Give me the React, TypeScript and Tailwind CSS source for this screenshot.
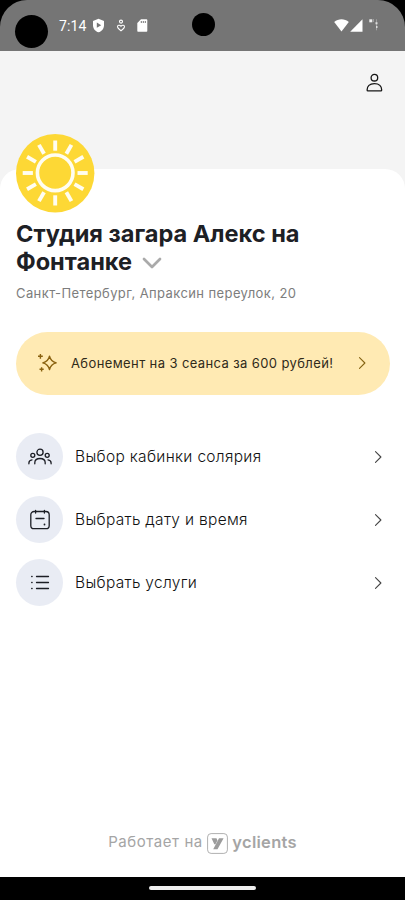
import React from 'react';

interface MenuItem {
    label: string;
    icon: React.ReactNode;
}

const RAYS = [0, 30, 60, 90, 120, 150, 180, 210, 240, 270, 300, 330];

const PeopleIcon = () => (
    <svg width="24" height="24" viewBox="0 0 24 24" fill="none" stroke="#1c1e25" strokeWidth="1.3" strokeLinecap="round">
        <circle cx="12" cy="7.3" r="3.1" />
        <path d="M6.800 18.800v-1c0-2.700 2-4.300 5.200-4.300s5.200 1.600 5.200 4.300v1" />
        <circle cx="4.800" cy="10.300" r="2" />
        <circle cx="19.200" cy="10.300" r="2" />
        <path d="M.9 18.800v-.8c0-1.700 1.200-2.900 3.100-3.100M23.100 18.800v-.8c0-1.700-1.200-2.900-3.100-3.100" />
    </svg>
);

const CalendarIcon = () => (
    <svg width="24" height="24" viewBox="0 0 24 24" fill="none" stroke="#1c1e25" strokeWidth="1.3" strokeLinecap="round">
        <rect x="2.800" y="3.500" width="18.400" height="17.200" rx="3.300" />
        <path d="M7.600 2.400v2.600M16.400 2.400v2.600M8 10.500h8" />
        <circle cx="16.500" cy="16.500" r=".9" fill="#1c1e25" stroke="none" />
    </svg>
);

const ListIcon = () => (
    <svg width="24" height="24" viewBox="0 0 24 24" fill="none" stroke="#1c1e25" strokeWidth="1.3" strokeLinecap="round">
        <path d="M8.500 5.500h12M8.500 11.500h12M8.500 17.500h12" />
        <path d="M3.700 5.500h.4M3.700 11.500h.4M3.700 17.500h.4" />
    </svg>
);

const Chevron = ({ className }: { className: string }) => (
    <svg className={className} width="8" height="14" viewBox="0 0 8 14" fill="none" stroke="currentColor" strokeWidth="1.1" strokeLinecap="round" strokeLinejoin="round">
        <path d="M1.500 1.700 6.900 7l-5.400 5.300" />
    </svg>
);

const MENU: MenuItem[] = [
    { label: 'Выбор кабинки солярия', icon: <PeopleIcon /> },
    { label: 'Выбрать дату и время', icon: <CalendarIcon /> },
    { label: 'Выбрать услуги', icon: <ListIcon /> },
];

const StatusBar = () => (
    <div className="bg-black">
        <div className="flex h-[51px] items-start rounded-t-[27px] bg-[#757575]">
            <div className="ml-[15px] mt-[14.5px] size-[33px] shrink-0 rounded-full bg-black" />
            <span className="ml-[11px] mt-[16px] w-[27px] font-['Roboto',sans-serif] text-[14px] leading-5 tracking-[0.1px] text-white">7:14</span>
            <svg className="ml-[6px] mt-[18px]" width="13" height="15" viewBox="0 0 13 15">
                <path d="M6.500.8 12 2.900v4.300c0 3.300-2.200 6.100-5.500 7.100C3.200 13.300 1 10.500 1 7.200V2.900z" fill="#fff" />
                <path d="M4.800 4.600v5.200l4.400-2.600z" fill="#757575" />
            </svg>
            <svg className="ml-[10.5px] mt-[19px]" width="10" height="13" viewBox="0 0 10 13" fill="none" stroke="#fff" strokeWidth="1.1">
                <circle cx="5" cy="2.600" r="1.500" />
                <path d="M5 7.300C3.700 5.400 1.300 6.200 1.500 7.900 1.700 9.500 3.700 10.700 5 11.700c1.300-1 3.300-2.200 3.500-3.800C8.700 6.200 6.300 5.400 5 7.300z" />
            </svg>
            <svg className="ml-[11.5px] mt-[19px]" width="11" height="13" viewBox="0 0 11 13">
                <path d="M4 .3h5.300c.6 0 1 .4 1 1v10.400c0 .6-.4 1-1 1H1.300c-.6 0-1-.4-1-1V4z" fill="#fff" />
                <path d="M4.300 2v2M6.300 2v2M8.300 2v2" stroke="#757575" />
            </svg>
            <div className="ml-[43.5px] mt-[13px] size-[23px] shrink-0 rounded-full bg-black" />
            <svg className="ml-[119.5px] mt-[19px]" width="15" height="13" viewBox="0 0 15 13">
                <path d="M7.500 12.500.2 3.100C4.300-.6 10.700-.6 14.800 3.100z" fill="#fff" />
            </svg>
            <svg className="ml-[1px] mt-[19px]" width="13" height="13" viewBox="0 0 13 13">
                <path d="M12.500.3v12.400H.2z" fill="#fff" />
            </svg>
            <svg className="ml-[6px] mt-[18px]" width="10" height="13" viewBox="0 0 10 13">
                <path d="M.3 1.300H3.300v3H.3z" fill="#eee" />
                <path d="M4 1h.8v3H4z" fill="#aaa" />
                <path d="M7.500 1.300v11" stroke="#aaa" strokeWidth=".8" />
                <path d="M6.500 4.300h2v2h-2zM7 8h1.500v2H7z" fill="#ddd" />
            </svg>
        </div>
    </div>
);

const SunLogo = () => (
    <svg width="79" height="79" viewBox="0 0 79 79" className="block">
        <circle cx="39.200" cy="39.200" r="39.200" fill="#fdd835" />
        <circle cx="39.200" cy="38.800" r="17.800" fill="none" stroke="#fffdf0" strokeWidth="3.600" />
        {RAYS.map((angle) => (
            <path key={angle} d="M39.200 6.500v10.200" stroke="#fffdf0" strokeWidth="3.900" transform={`rotate(${angle} 39.200 39)`} />
        ))}
    </svg>
);

export default function App() {
    return (
        <div className="flex h-[900px] w-[405px] flex-col overflow-hidden bg-[#f4f4f4] font-['Inter',sans-serif]">
            <StatusBar />

            {/* Profile button */}
            <header className="flex h-[118px] shrink-0 justify-end pr-[22px] pt-[22px]">
                <svg width="18" height="20" viewBox="0 0 18 20" fill="none" stroke="#161616" strokeWidth="1.3">
                    <circle cx="9.400" cy="4.700" r="3.300" />
                    <path d="M2.100 16.900c0-3.700 2.400-6.300 7.300-6.300s7.300 2.600 7.300 6.300c0 .6-.3.900-.9.900H3c-.6 0-.9-.3-.9-.9z" />
                </svg>
            </header>

            <main className="flex grow flex-col rounded-t-[20px] bg-white px-4">
                <div className="-mt-[35px] h-[79px]">
                    <SunLogo />
                </div>

                <h1 className="mt-[7px] text-[23.55px] leading-[27.5px] font-bold whitespace-nowrap text-[#1d2025]">
                    Студия загара Алекс на
                    <br />
                    <span className="flex items-center">
                        Фонтанке
                        <svg className="ml-[10px] mt-[3px]" width="20" height="12" viewBox="0 0 20 12" fill="none" stroke="#aaa" strokeWidth="2.7" strokeLinecap="round" strokeLinejoin="round">
                            <path d="M2 2l8 8 8-8" />
                        </svg>
                    </span>
                </h1>
                <p className="mt-[8px] text-[13px] leading-5 tracking-[0.4px] whitespace-nowrap text-[#7d7d7d]">
                    Санкт-Петербург, Апраксин переулок, 20
                </p>

                {/* Promo */}
                <button className="mt-[28.5px] flex h-[63px] w-[374px] shrink-0 items-center rounded-[31.5px] bg-[#ffeab3] pl-[21px] pr-[24px] text-left">
                    <svg width="21" height="20" viewBox="0 0 21 20" fill="none" stroke="#8a6210" strokeWidth="1.4" strokeLinejoin="round">
                        <path d="M12.500 3.200c1 4.200 2.500 5.700 6.700 6.700-4.200 1-5.700 2.500-6.700 6.700-1-4.200-2.500-5.700-6.700-6.700 4.200-1 5.700-2.500 6.700-6.700z" />
                        <path d="M3.400.9v4.800M1 3.300h4.800M4.600 14.200v4.200M2.500 16.300h4.200" />
                    </svg>
                    <span className="ml-[13px] mt-px grow text-[13px] tracking-[0.39px] whitespace-nowrap text-[#302a1a]">Абонемент на 3 сеанса за 600 рублей!</span>
                    <Chevron className="text-[#846313]" />
                </button>

                <nav className="mt-[38.5px] flex flex-col gap-4">
                    {MENU.map((item) => (
                        <button key={item.label} className="flex h-[47px] items-center pr-[7px] text-left">
                            <span className="flex size-[47px] items-center justify-center rounded-full bg-[#e9ecf4]">{item.icon}</span>
                            <span className="ml-[12px] grow text-[15.5px] font-light tracking-[0.31px] whitespace-nowrap text-[#111]">{item.label}</span>
                            <Chevron className="text-[#444]" />
                        </button>
                    ))}
                </nav>

                <footer className="mt-auto mb-[22px] flex h-[24px] items-center justify-center text-[#a5a5a5]">
                    <span className="-mt-[2px] text-[15px] tracking-[0.56px]">Работает на</span>
                    <svg className="ml-[4.5px]" width="21" height="21" viewBox="0 0 21 21">
                        <rect x=".6" y=".6" width="19.800" height="19.800" rx="3.500" fill="none" stroke="#b0b0b0" />
                        <path d="M4.500 5.200h5l.9 2.300-2 3.800H7.300zM12 5.200h4.600L10.500 16.200H6.200z" fill="#9c9c9c" />
                    </svg>
                    <span className="-mt-[2px] ml-[4px] text-[16.5px] leading-5 font-semibold tracking-[0.28px]">yclients</span>
                </footer>
            </main>

            <div className="flex h-[23px] shrink-0 justify-center bg-black pt-[9px]">
                <div className="h-[4px] w-[107px] rounded-full bg-[#eee]" />
            </div>
        </div>
    );
}
